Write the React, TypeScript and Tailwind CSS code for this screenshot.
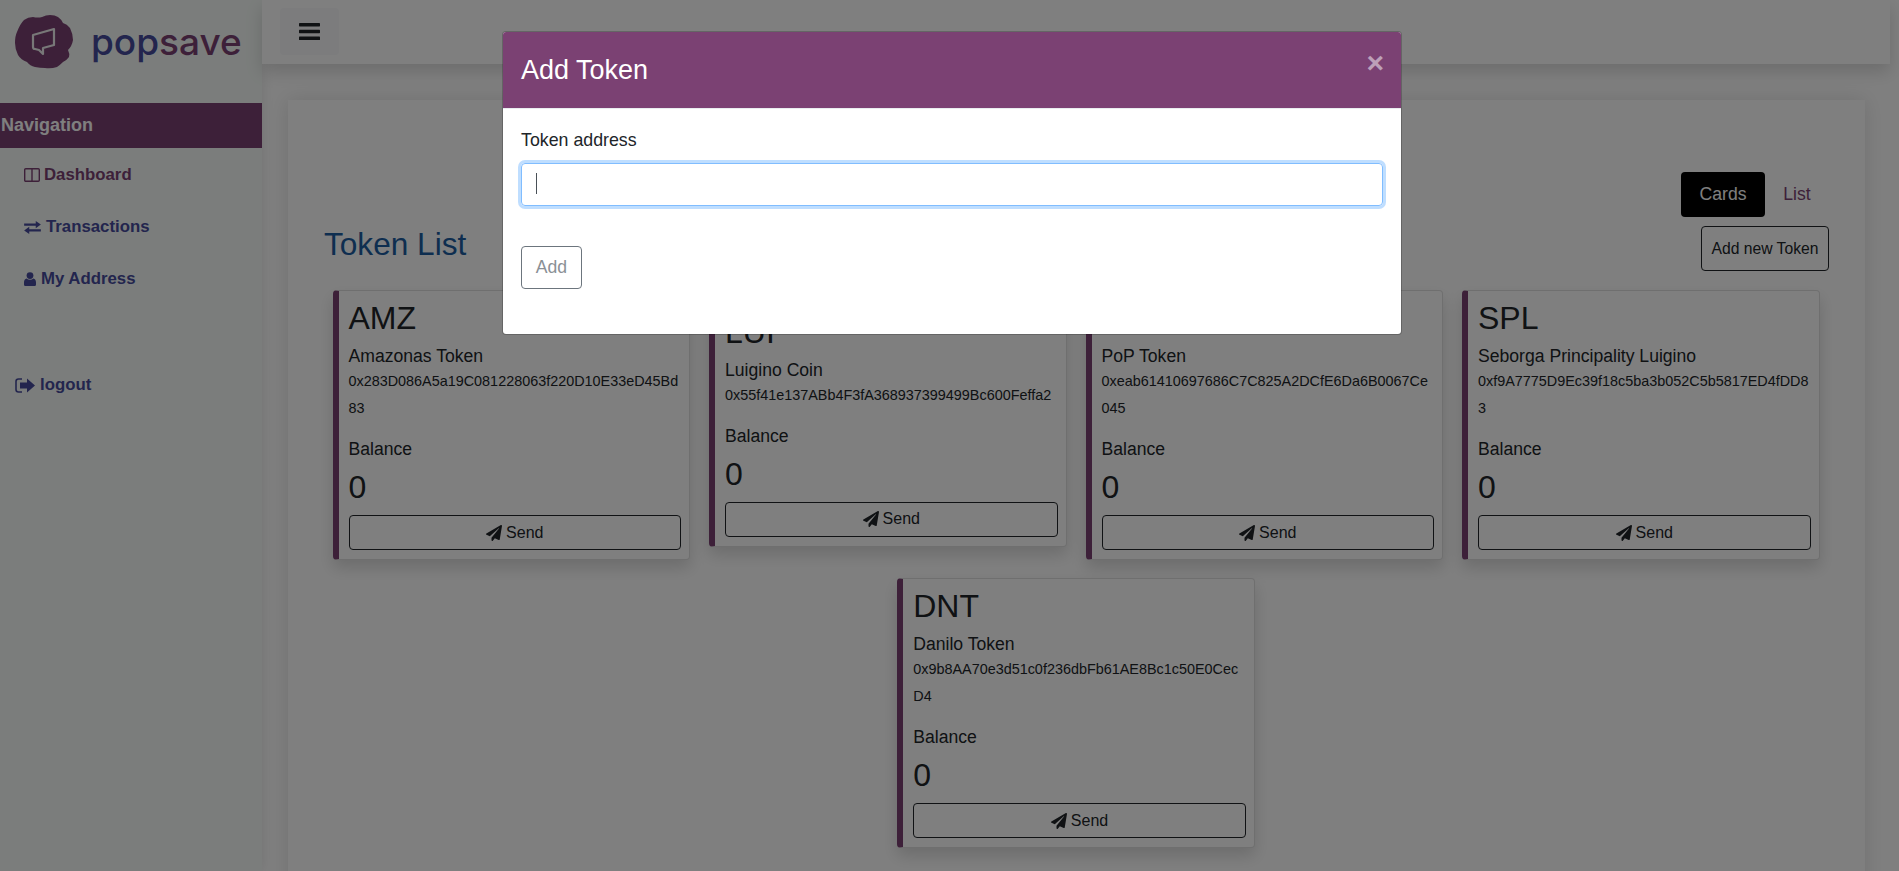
import { FaPaperPlane } from 'react-icons/fa';

const tokens = [
  { symbol: 'AMZ', name: 'Amazonas Token', address: '0x283D086A5a19C081228063f220D10E33eD45Bd83' },
  { symbol: 'LUI', name: 'Luigino Coin', address: '0x55f41e137ABb4F3fA368937399499Bc600Feffa2' },
  { symbol: 'POP', name: 'PoP Token', address: '0xeab61410697686C7C825A2DCfE6Da6B0067Ce045' },
  { symbol: 'SPL', name: 'Seborga Principality Luigino', address: '0xf9A7775D9Ec39f18c5ba3b052C5b5817ED4fDD83' },
  { symbol: 'DNT', name: 'Danilo Token', address: '0x9b8AA70e3d51c0f236dbFb61AE8Bc1c50E0CecD4' },
];

const ColumnsIcon = () => (
  <svg width="16" height="14" viewBox="0 0 16 14" className="mr-1 inline-block" fill="none" stroke="currentColor" strokeWidth="1.4">
    <rect x="0.7" y="0.7" width="14.6" height="12.6" rx="1" />
    <path d="M8 1v12" />
  </svg>
);

const ExchangeIcon = () => (
  <svg width="17" height="13" viewBox="0 0 18 14" className="mr-[5px] inline-block" fill="currentColor">
    <path d="M0 2.800h12.500V0L18 3.900l-5.500 3.900V5H0z" />
    <path d="M18 11.200H5.500V14L0 10.100l5.500-3.900V9H18z" />
  </svg>
);

const UserIcon = () => (
  <svg width="12" height="14" viewBox="0 0 12 14" className="mr-[5px] inline-block" fill="currentColor">
    <circle cx="6" cy="3.600" r="3.400" />
    <path d="M2.600 6.600C1 7 0 8.400 0 10.600v1.800C0 13.400.8 14 1.600 14h8.800c.8 0 1.600-.6 1.600-1.600v-1.800c0-2.200-1-3.600-2.600-4-.9.8-2 1.200-3.400 1.200S3.500 7.400 2.600 6.600z" />
  </svg>
);

const LogoutIcon = () => (
  <svg width="20" height="17" viewBox="0 0 20 16" className="mr-[5px] inline-block" fill="currentColor">
    <path d="M7 1.500H3.500C1.900 1.500 1 2.500 1 4v8c0 1.500.9 2.500 2.500 2.500H7" fill="none" stroke="currentColor" strokeWidth="1.600" />
    <path d="M12 1l8 7-8 7v-4H5V5h7z" />
  </svg>
);

const TokenCard = ({ symbol, name, address }: { symbol: string; name: string; address: string }) => (
  <div className="w-[357.5px] rounded border border-l-[6px] border-[#00000020] border-l-[#7b4173] bg-white pt-2 pr-2 pb-[9px] pl-2.5 shadow-[0_8px_16px_rgba(0,0,0,0.15)]">
    <h2 className="mb-[7px] text-[32px] leading-[38px] text-[#212529]">{symbol}</h2>
    <div className="text-[17.6px] leading-6 text-[#212529]">{name}</div>
    <div className="mb-[15px] text-[14.4px] leading-[27px] break-all text-[#212529]">{address}</div>
    <div className="mb-[7px] text-[17.6px] leading-6 text-[#212529]">Balance</div>
    <h2 className="mb-[9px] text-[32px] leading-[38px] text-[#212529]">0</h2>
    <button className="flex h-[35px] w-full items-center justify-center gap-1 rounded border border-[#212529] text-base text-[#212529]">
      <FaPaperPlane className="text-[16px]" />
      Send
    </button>
  </div>
);

export default function App() {
  return (
    <div className="relative flex h-[871px] overflow-hidden bg-white font-['Liberation_Sans',Arial,sans-serif]">
      <aside className="w-[262px] shrink-0 bg-[#f6fbf8] shadow-[0_0_12px_rgba(0,0,0,0.1)]">
        <div className="flex h-[103px] items-start pt-[15px] pl-[15px]">
          <svg width="58" height="54" viewBox="0 0 58 54">
            <path
              d="M0 28Q0 21 2 17Q5 9 9 5Q13 2 18 2Q23 3 27 2Q31 0 35 0Q40 0 43 2Q46 4 48 8Q52 9 55 13Q58 19 58 25Q57 31 53 35Q55 39 54 42Q52 45 48 47Q45 50 42 52Q36 54 30 53Q25 53 20 52Q15 51 12 47Q6 45 3 40Q0 34 0 28Z"
              fill="#7b4173"
            />
            <path d="M18 20L39 14V30L28 33V39L24 35L20 34Q18 34 18 32Z" fill="none" stroke="#f0f0f0" strokeWidth="2.200" strokeLinejoin="round" />
          </svg>
          <span className="mt-[2px] ml-[18px] font-['Inter',sans-serif] text-[37px] leading-[50px] font-medium text-[#474b9c]">
            pop<span className="text-[#7b4173]">save</span>
          </span>
        </div>
        <div className="flex h-[45px] items-center bg-[#7b4173] pl-px text-[18px] font-bold text-white">Navigation</div>
        <nav className="pt-px text-[16.8px] font-bold">
          <a className="flex h-[52px] items-center pl-6 text-[#7b4173]">
            <ColumnsIcon />
            Dashboard
          </a>
          <a className="flex h-[52px] items-center pl-6 text-[#474b9c]">
            <ExchangeIcon />
            Transactions
          </a>
          <a className="flex h-[52px] items-center pl-6 text-[#474b9c]">
            <UserIcon />
            My Address
          </a>
          <a className="mt-[54px] flex h-[52px] items-center pl-[15px] text-[#474b9c]">
            <LogoutIcon />
            logout
          </a>
        </nav>
      </aside>

      <div className="min-w-0 flex-1">
        <header className="mr-[9px] flex h-16 items-start bg-white pt-2 pl-[18px] shadow-[0_8px_16px_rgba(0,0,0,0.15)]">
          <button className="flex h-[47px] w-[59px] items-center justify-center rounded bg-[#f8f9fa]">
            <svg width="21" height="17" viewBox="0 0 21 17" fill="#212529">
              <rect width="21" height="3.400" rx="0.6" />
              <rect y="6.800" width="21" height="3.400" rx="0.6" />
              <rect y="13.600" width="21" height="3.400" rx="0.6" />
            </svg>
          </button>
        </header>

        <main className="mt-9 mr-[34px] ml-[26px] h-[800px] bg-white px-[36px] pt-[72px] shadow-[0_0_20px_rgba(0,0,0,0.12)]">
          <div className="flex justify-end">
            <button className="h-[45px] w-[84px] rounded bg-black text-[17.6px] text-white">Cards</button>
            <span className="flex h-[45px] w-16 items-center justify-center text-[17.6px] text-[#7b4173]">List</span>
          </div>
          <div className="mt-[9px] flex h-[45px] items-center justify-between">
            <h1 className="mb-2 text-[31.6px] text-[#1c5da0]">Token List</h1>
            <button className="h-[45px] w-[128px] rounded border border-[#212529] text-[15.7px] text-[#212529]">Add new Token</button>
          </div>
          <div className="mt-[19px] flex flex-wrap items-center justify-center gap-x-[19px] gap-y-[18px] pr-px">
            {tokens.map((t) => (
              <TokenCard key={t.symbol} {...t} />
            ))}
          </div>
        </main>
      </div>

      <div className="absolute inset-0 bg-black/50" />

      <div className="absolute top-[31px] left-[502px] w-[900px] overflow-hidden rounded border border-[#00000033] bg-white bg-clip-padding">
        <div className="flex h-[77px] items-start justify-between border-b border-[#e9ecef] bg-[#7b4173] pt-5 pr-[17px] pl-[18px]">
          <h4 className="text-[27px] leading-9 text-white">Add Token</h4>
          <span className="mt-[-7px] text-[30px] leading-9 font-bold text-white/50">×</span>
        </div>
        <div className="px-[18px] pt-[19px] pb-[45px]">
          <label className="block text-[17.8px] leading-6 text-[#212529]">Token address</label>
          <div className="relative mt-[11px]">
            <input className="block h-[43px] w-full rounded border border-[#80bdff] px-3 shadow-[0_0_0_3px_rgba(0,123,255,0.25)] outline-none" />
            <span className="absolute top-[10px] left-[15px] h-[21px] w-px bg-[#495057]" />
          </div>
          <button className="mt-10 block h-[43px] w-[61px] rounded border border-[#6c757d] text-[17.6px] text-[#8a9096]">Add</button>
        </div>
      </div>
    </div>
  );
}
